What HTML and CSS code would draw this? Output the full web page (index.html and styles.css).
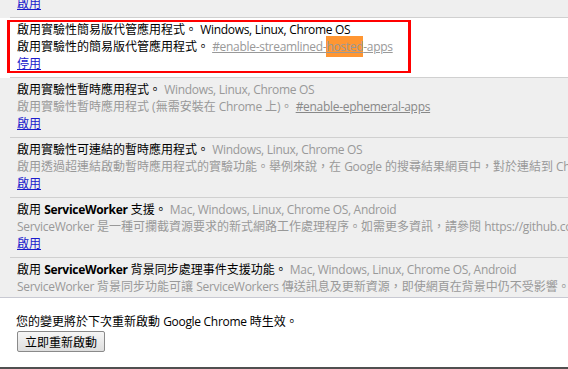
FILE: index.html
```html
<!DOCTYPE html>
<html lang="zh-Hant">
<head>
<meta charset="utf-8">
<title>chrome://flags</title>
<link rel="stylesheet" href="styles.css">
</head>
<body>
<div class="page">
  <div class="scroller">
    <div class="list">
      <div class="exp disabled">
        <div class="exp-inner">
          <div class="line"><span class="name">啟用實驗性延伸功能 API。</span> <span class="platforms">Mac, Windows, Linux, Chrome OS</span></div>
          <div class="line desc">啟用實驗性延伸功能 API。 <a class="flag" href="#">#extension-apis</a></div>
          <div class="line"><a class="action" href="#">啟用</a></div>
        </div>
      </div>
      <div class="exp enabled">
        <div class="exp-inner">
          <div class="line"><span class="name">啟用實驗性簡易版代管應用程式。</span> <span class="platforms">Windows, Linux, Chrome OS</span></div>
          <div class="line desc">啟用實驗性的簡易版代管應用程式。 <a class="flag" href="#">#enable-streamlined-<mark class="hit">hosted</mark>-apps</a></div>
          <div class="line"><a class="action" href="#">停用</a></div>
        </div>
        <div class="annot"></div>
      </div>
      <div class="exp disabled">
        <div class="exp-inner">
          <div class="line"><span class="name">啟用實驗性暫時應用程式。</span> <span class="platforms">Windows, Linux, Chrome OS</span></div>
          <div class="line desc">啟用實驗性暫時應用程式 (無需安裝在 <span class="lat">Chrome</span> 上)。 <a class="flag" href="#">#enable-ephemeral-apps</a></div>
          <div class="line"><a class="action" href="#">啟用</a></div>
        </div>
      </div>
      <div class="exp disabled">
        <div class="exp-inner">
          <div class="line"><span class="name">啟用實驗性可連結的暫時應用程式。</span> <span class="platforms">Windows, Linux, Chrome OS</span></div>
          <div class="line desc">啟用透過超連結啟動暫時應用程式的實驗功能。舉例來說，在 <span class="lat">Google</span> 的搜尋結果網頁中，對於連結到 <span class="lat">Chrome</span> 線上應用程式商店中應用程式的超連結。 <a class="flag" href="#">#enable-linkable-ephemeral-apps</a></div>
          <div class="line"><a class="action" href="#">啟用</a></div>
        </div>
      </div>
      <div class="exp disabled">
        <div class="exp-inner">
          <div class="line"><span class="name">啟用 <b class="lat">ServiceWorker</b> 支援。</span> <span class="platforms">Mac, Windows, Linux, Chrome OS, Android</span></div>
          <div class="line desc"><span class="lat">ServiceWorker</span> 是一種可攔截資源要求的新式網路工作處理程序。如需更多資訊，請參閱 <span class="lat">https://github.com/slightlyoff/ServiceWorker</span>。 <a class="flag" href="#">#enable-service-worker</a></div>
          <div class="line"><a class="action" href="#">啟用</a></div>
        </div>
      </div>
      <div class="exp disabled">
        <div class="exp-inner">
          <div class="line"><span class="name">啟用 <b class="lat">ServiceWorker</b> 背景同步處理事件支援功能。</span> <span class="platforms">Mac, Windows, Linux, Chrome OS, Android</span></div>
          <div class="line desc"><span class="lat">ServiceWorker</span> 背景同步功能可讓 <span class="lat">ServiceWorkers</span> 傳送訊息及更新資源，即使網頁在背景中仍不受影響。 <a class="flag" href="#">#enable-service-worker-sync</a></div>
          <div class="line"><a class="action" href="#">啟用</a></div>
        </div>
      </div>
    </div>
  </div>
  <div class="footer">
    <div class="notice">您的變更將於下次重新啟動 <span class="lat">Google Chrome</span> 時生效。</div>
    <button class="relaunch" type="button">立即重新啟動</button>
  </div>
  <div class="edge"></div>
</div>
</body>
</html>
```

FILE: styles.css
```css
html, body {
  margin: 0;
  padding: 0;
  width: 568px;
  height: 369px;
  overflow: hidden;
  background: #fff;
}

body {
  font-family: "Open Sans", "Noto Sans CJK TC", sans-serif;
  font-size: 12px;
  color: #000;
}

.page {
  display: flex;
  flex-direction: column;
  height: 369px;
}

.scroller {
  flex: 1;
  min-height: 0;
  overflow: hidden;
}

.list {
  margin-top: -42px;
}

.exp {
  position: relative;
}

.exp.disabled {
  background: #efefef;
}

.exp.enabled {
  background: #fff;
}

.exp-inner {
  margin-left: 10px;
  padding: 3px 0 5px 7px;
  border-bottom: 1px solid #d0d0d0;
}

.line {
  height: 17px;
  line-height: 17px;
  white-space: nowrap;
}

.lat,
.platforms,
.flag {
  letter-spacing: -0.3px;
}

.name b {
  font-weight: bold;
}

.disabled .platforms,
.disabled .desc {
  color: #999;
}

.enabled .platforms,
.enabled .desc {
  color: #000;
}

.flag {
  color: #999;
  text-decoration: underline;
}

.disabled .flag {
  color: #888;
}

.hit {
  background: #ff9632;
  color: inherit;
  padding: 2px 0;
}

.action {
  color: #1a1acc;
  text-decoration: underline;
}

.annot {
  position: absolute;
  left: 7px;
  top: 2px;
  width: 404px;
  height: 53px;
  box-sizing: border-box;
  border: 3px solid #f00;
  border-top-width: 2px;
  border-bottom-width: 2px;
  pointer-events: none;
}

.footer {
  flex: 0 0 auto;
  height: 70px;
  box-sizing: border-box;
  border-top: 1px solid #c8c9d2;
  padding: 15px 0 0 16px;
  display: flex;
  flex-direction: column;
  align-items: flex-start;
  background: #fff;
}

.notice {
  line-height: 17px;
  height: 17px;
  white-space: nowrap;
}

.relaunch {
  margin: 1px 0 0 1px;
  height: 21px;
  width: 88px;
  padding: 0;
  font-family: "Open Sans", "Noto Sans CJK TC", sans-serif;
  font-size: 12px;
  color: #000;
  background: linear-gradient(#f6f6f6, #dedede);
  border: 1px solid #8a8a8a;
  border-radius: 2px;
}

.edge {
  flex: 0 0 auto;
  height: 2px;
  background: #505050;
}
```
